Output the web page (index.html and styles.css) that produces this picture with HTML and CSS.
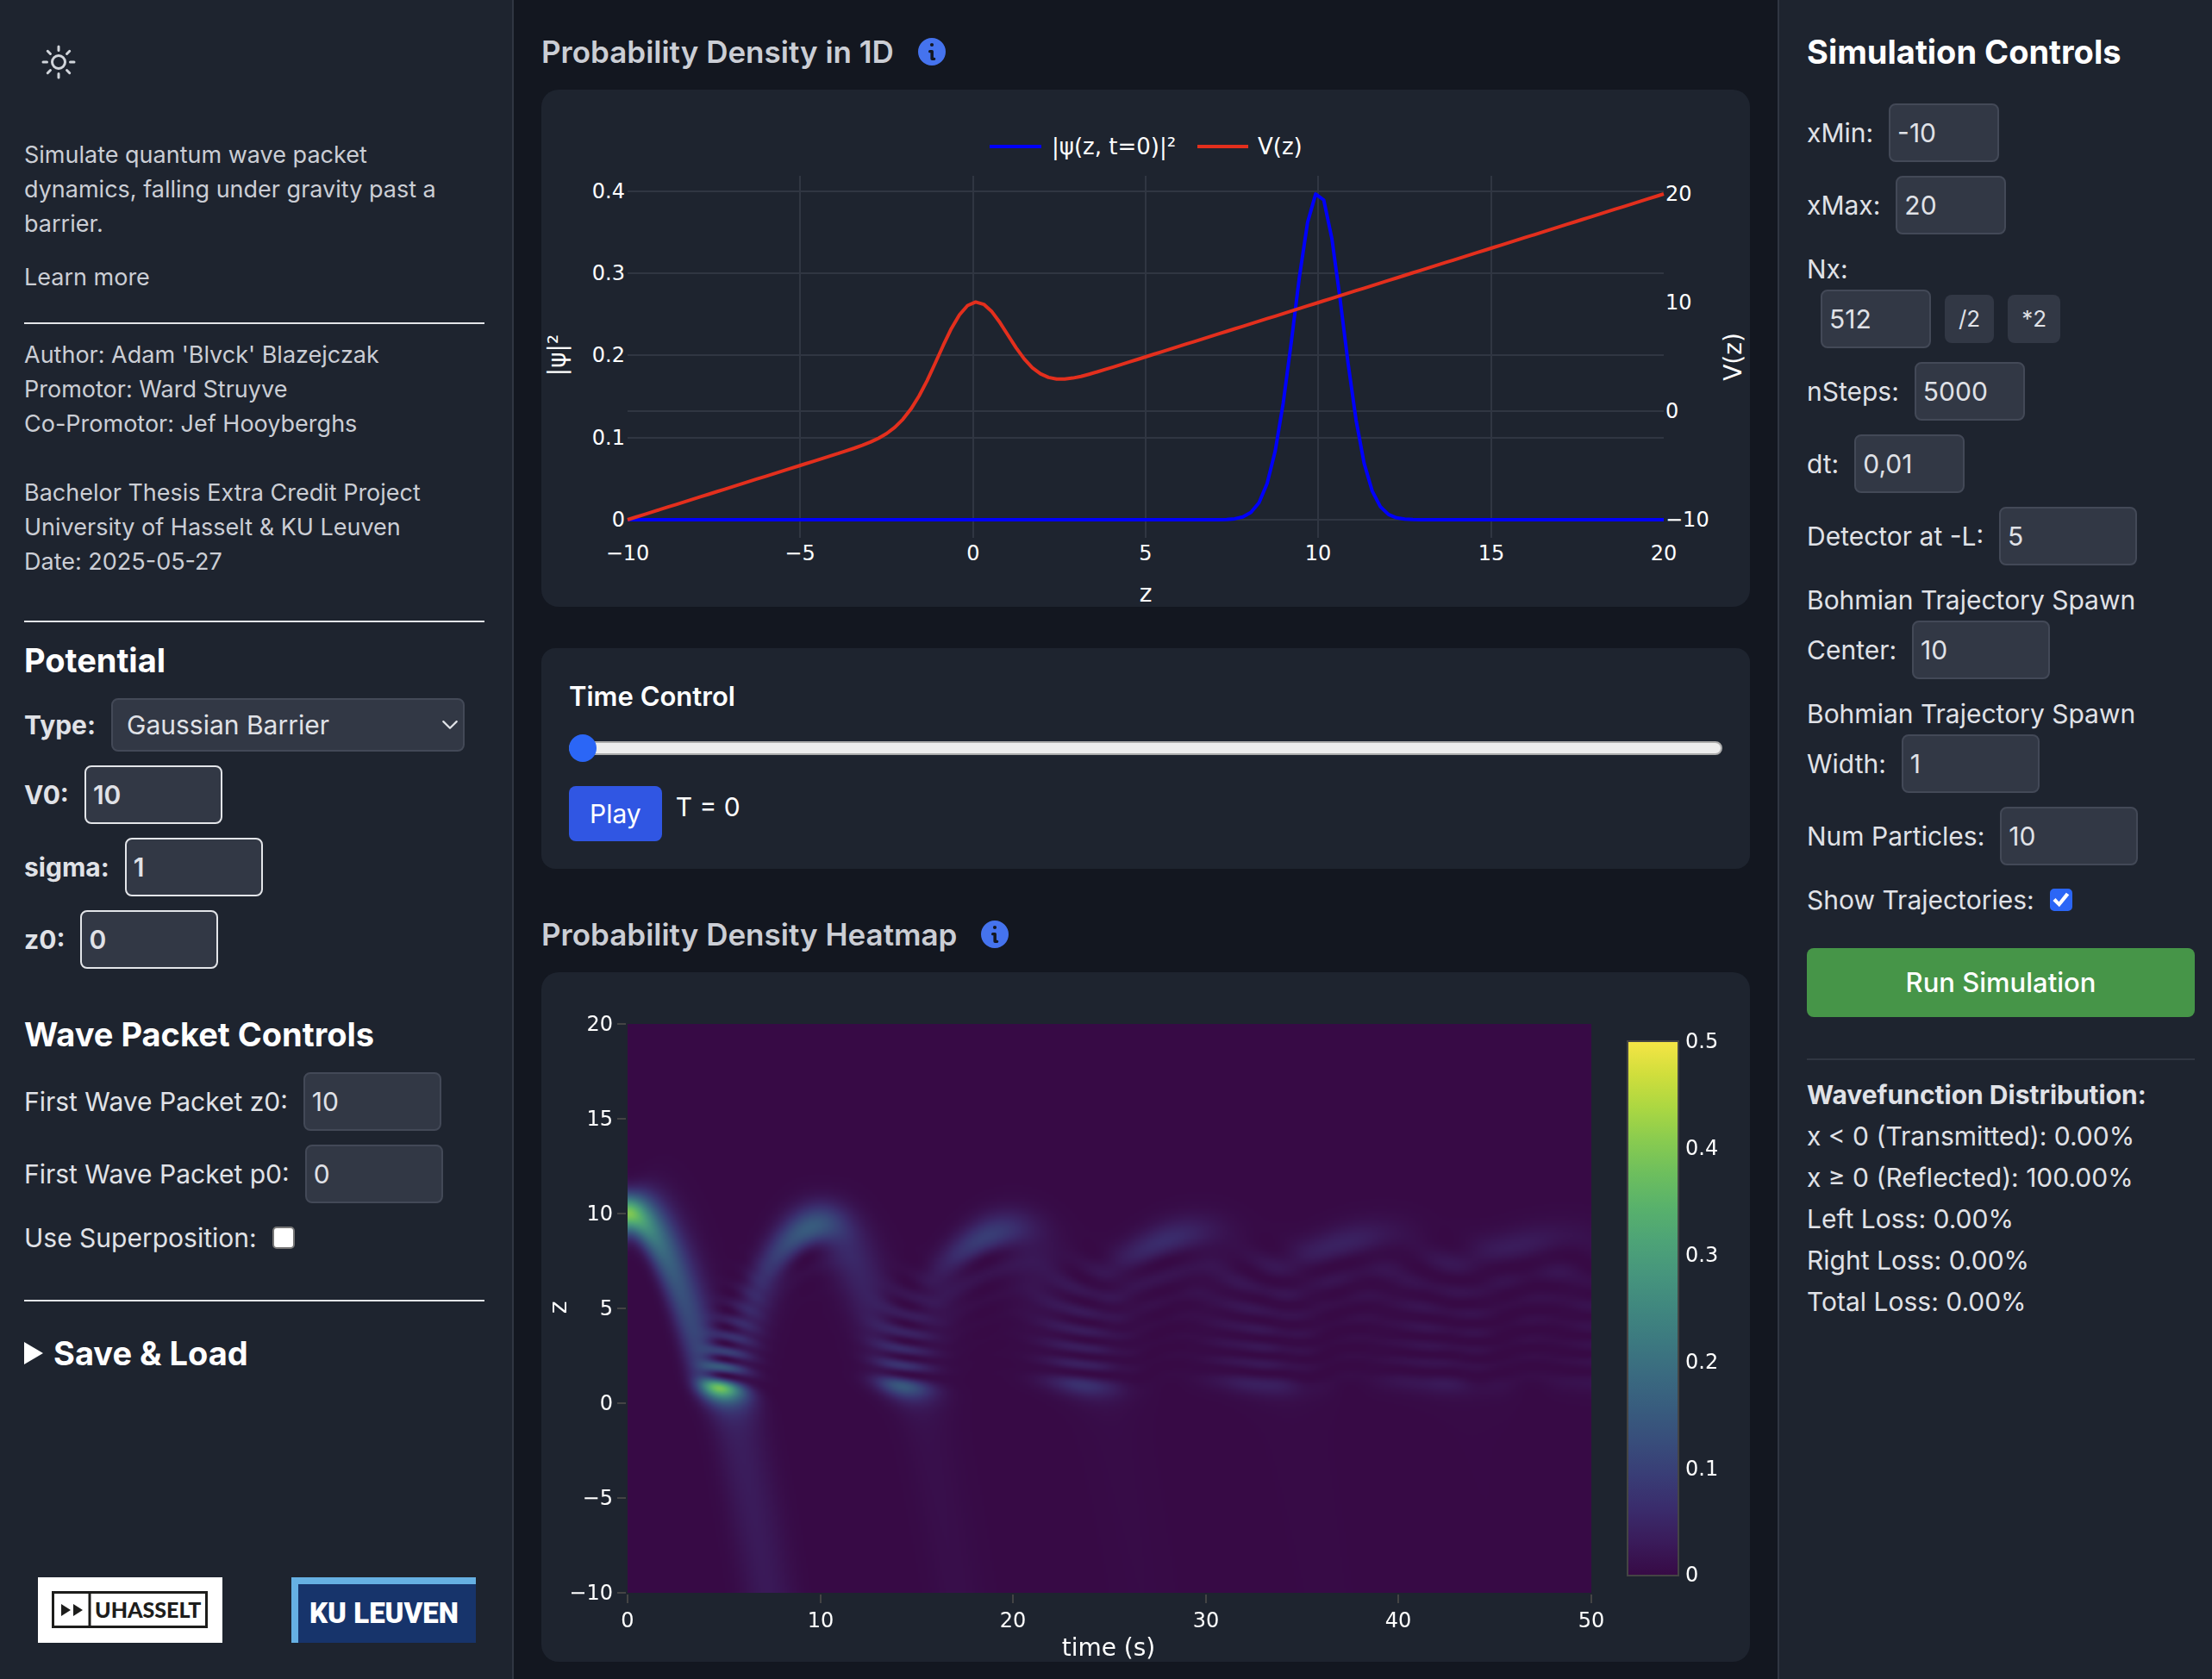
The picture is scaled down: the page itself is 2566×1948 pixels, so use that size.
FILE: index.html
```html
<!DOCTYPE html>
<html lang="en">
<head>
<meta charset="utf-8">
<meta name="viewport" content="width=device-width, initial-scale=1">
<title>Quantum wave packet simulation</title>
<link rel="stylesheet" href="styles.css">
</head>
<body>
<div class="app">
  <aside class="sidebar">
    <button class="theme-toggle" type="button" aria-label="Toggle theme">
      <svg viewBox="0 0 24 24" fill="none" stroke="currentColor" stroke-width="1.5" stroke-linecap="round" stroke-linejoin="round"><path d="M12 3v2.25m6.364.386-1.591 1.591M21 12h-2.25m-.386 6.364-1.591-1.591M12 18.75V21m-4.773-4.227-1.591 1.591M5.25 12H3m4.227-4.773L5.636 5.636M15.75 12a3.75 3.75 0 1 1-7.5 0 3.75 3.75 0 0 1 7.5 0Z"/></svg>
    </button>
    <p class="small intro">Simulate quantum wave packet<br>dynamics, falling under gravity past a<br>barrier.</p>
    <p class="small"><a class="learn" href="#about">Learn more</a></p>
    <hr class="rule">
    <p class="small credits">Author: Adam 'Blvck' Blazejczak<br>Promotor: Ward Struyve<br>Co-Promotor: Jef Hooyberghs<br><br>Bachelor Thesis Extra Credit Project<br>University of Hasselt &amp; KU Leuven<br>Date: 2025-05-27</p>
    <hr class="rule rule-section">

    <section class="group">
      <h2>Potential</h2>
      <div class="field strong">
        <label for="type">Type:</label>
        <span class="select">
          <select id="type"><option>Gaussian Barrier</option></select>
          <svg viewBox="0 0 16 10" fill="none" stroke="currentColor" stroke-width="2" stroke-linecap="round" stroke-linejoin="round"><path d="M1 1l7 7 7-7"/></svg>
        </span>
      </div>
      <div class="field strong"><label for="v0">V0:</label><input id="v0" class="num bright" type="text" value="10"></div>
      <div class="field strong"><label for="sigma">sigma:</label><input id="sigma" class="num bright" type="text" value="1"></div>
      <div class="field strong"><label for="z0">z0:</label><input id="z0" class="num bright" type="text" value="0"></div>
    </section>

    <section class="group">
      <h2>Wave Packet Controls</h2>
      <div class="field"><label for="wz">First Wave Packet z0:</label><input id="wz" class="num" type="text" value="10"></div>
      <div class="field"><label for="wp">First Wave Packet p0:</label><input id="wp" class="num" type="text" value="0"></div>
      <div class="field"><label for="sup">Use Superposition:</label><input id="sup" class="check" type="checkbox"></div>
    </section>

    <hr class="rule">
    <details class="save">
      <summary>Save &amp; Load</summary>
    </details>

    <div class="logos">
      <svg class="logo" viewBox="0 0 214 76" role="img" aria-label="UHasselt">
        <rect width="214" height="76" fill="#fff"/>
        <rect x="17.500" y="17.500" width="178" height="40" fill="none" stroke="#1d1d1b" stroke-width="3"/>
        <path d="M60 17v41" stroke="#1d1d1b" stroke-width="3"/>
        <path d="M27 31l11 7-11 7zM41 31l11 7-11 7z" fill="#1d1d1b"/>
        <text x="66" y="47" class="uh">UHASSELT</text>
      </svg>
      <svg class="logo" viewBox="0 0 214 76" role="img" aria-label="KU Leuven">
        <rect width="214" height="76" fill="#66b0e3"/>
        <rect x="8" y="8" width="206" height="68" fill="#17346b"/>
        <text x="21" y="53" class="ku">KU LEUVEN</text>
      </svg>
    </div>
  </aside>

  <main class="content">
    <div class="title-row">
      <h1>Probability Density in 1D</h1>
      <button class="info" type="button" aria-label="About the probability density"><svg viewBox="0 0 20 20" fill="currentColor" fill-rule="evenodd"><path d="M10 0a10 10 0 1 0 0 20a10 10 0 1 0 0-20ZM10 3.700a1.300 1.300 0 1 1 0 2.600 1.300 1.300 0 0 1 0-2.600ZM8.500 8.800h1.700a1 1 0 0 1 1 1v4.400h.5a1 1 0 0 1 0 2h-1.600a1.100 1.100 0 0 1-1.100-1.100v-4.300h-.5a1 1 0 0 1 0-2Z"/></svg></button>
    </div>
    <section class="card">
      <svg class="chart" viewBox="0 0 1402 600">
        <g class="grid">
          <path d="M300 100V520M501 100V520M701 100V520M901 100V520M1102 100V520"/>
          <path d="M100 118H1302M100 213H1302M100 308H1302M100 373H1302M100 404H1302M100 499H1302"/>
        </g>
        <path id="psi" class="trace" stroke="#0000fa"/>
        <path id="pot" class="trace" stroke="#e32f1d"/>
        <path class="trace" stroke="#0000fa" d="M520 66H580"/>
        <path class="trace" stroke="#e32f1d" d="M761 66H820"/>
        <g class="legend"><text x="592" y="75">|ψ(z, t=0)|²</text><text x="831" y="75">V(z)</text></g>
        <g class="end"><text x="97" y="126">0.4</text><text x="97" y="221">0.3</text><text x="97" y="316">0.2</text><text x="97" y="412">0.1</text><text x="97" y="507">0</text></g>
        <g class="mid"><text x="100" y="546">−10</text><text x="300" y="546">−5</text><text x="501" y="546">0</text><text x="701" y="546">5</text><text x="901" y="546">10</text><text x="1102" y="546">15</text><text x="1302" y="546">20</text></g>
        <g><text x="1304" y="129">20</text><text x="1304" y="255">10</text><text x="1304" y="381">0</text><text x="1304" y="507">−10</text></g>
        <g class="mid axis"><text x="701" y="594">z</text><text transform="translate(28 308) rotate(-90)">|ψ|²</text><text transform="translate(1392 310) rotate(-90)">V(z)</text></g>
      </svg>
    </section>

    <section class="card time">
      <label class="time-label" for="time">Time Control</label>
      <input id="time" class="slider" type="range" min="0" max="500" value="0">
      <div class="play-row"><button class="play" type="button">Play</button><output for="time">T = 0</output></div>
    </section>

    <div class="title-row">
      <h1>Probability Density Heatmap</h1>
      <button class="info" type="button" aria-label="About the heatmap"><svg viewBox="0 0 20 20" fill="currentColor" fill-rule="evenodd"><path d="M10 0a10 10 0 1 0 0 20a10 10 0 1 0 0-20ZM10 3.700a1.300 1.300 0 1 1 0 2.600 1.300 1.300 0 0 1 0-2.600ZM8.500 8.800h1.700a1 1 0 0 1 1 1v4.400h.5a1 1 0 0 1 0 2h-1.600a1.100 1.100 0 0 1-1.100-1.100v-4.300h-.5a1 1 0 0 1 0-2Z"/></svg></button>
    </div>
    <section class="card">
      <svg class="chart" viewBox="0 0 1402 800">
        <defs><linearGradient id="scale" x1="0" y1="1" x2="0" y2="0"></linearGradient></defs>
        <foreignObject x="100" y="60" width="1118" height="660"><canvas id="heat" class="heat" width="559" height="330"></canvas></foreignObject>
        <path class="ticks" d="M88 60h10M88 170h10M88 280h10M88 390h10M88 500h10M88 610h10M88 720h10M100 722v10M324 722v10M547 722v10M771 722v10M994 722v10M1218 722v10"/>
        <rect x="1260" y="80" width="59" height="620" fill="url(#scale)" stroke="#444" stroke-width="2"/>
        <g class="end"><text x="83" y="68">20</text><text x="83" y="178">15</text><text x="83" y="288">10</text><text x="83" y="398">5</text><text x="83" y="508">0</text><text x="83" y="618">−5</text><text x="83" y="728">−10</text></g>
        <g class="mid"><text x="100" y="760">0</text><text x="324" y="760">10</text><text x="547" y="760">20</text><text x="771" y="760">30</text><text x="994" y="760">40</text><text x="1218" y="760">50</text></g>
        <g><text x="1327" y="88">0.5</text><text x="1327" y="212">0.4</text><text x="1327" y="336">0.3</text><text x="1327" y="460">0.2</text><text x="1327" y="584">0.1</text><text x="1327" y="707">0</text></g>
        <g class="mid axis"><text x="658" y="793">time (s)</text><text transform="translate(29 389) rotate(-90)">z</text></g>
      </svg>
    </section>
  </main>

  <aside class="controls">
    <h2>Simulation Controls</h2>
    <div class="field"><label for="xmin">xMin:</label><input id="xmin" class="num narrow" type="text" value="-10"></div>
    <div class="field"><label for="xmax">xMax:</label><input id="xmax" class="num narrow" type="text" value="20"></div>
    <div class="field-block">
      <label for="nx">Nx:</label>
      <div class="field indent"><input id="nx" class="num narrow" type="text" value="512"><button class="step" type="button">/2</button><button class="step" type="button">*2</button></div>
    </div>
    <div class="field"><label for="nsteps">nSteps:</label><input id="nsteps" class="num narrow" type="text" value="5000"></div>
    <div class="field"><label for="dt">dt:</label><input id="dt" class="num narrow" type="text" value="0,01"></div>
    <div class="field"><label for="det">Detector at -L:</label><input id="det" class="num" type="text" value="5"></div>
    <label class="field-block" for="bc">Bohmian Trajectory Spawn
      <span class="field">Center: <input id="bc" class="num" type="text" value="10"></span>
    </label>
    <label class="field-block" for="bw">Bohmian Trajectory Spawn
      <span class="field">Width: <input id="bw" class="num" type="text" value="1"></span>
    </label>
    <div class="field"><label for="np">Num Particles:</label><input id="np" class="num" type="text" value="10"></div>
    <div class="field"><label for="traj">Show Trajectories:</label><input id="traj" class="check" type="checkbox" checked></div>
    <button class="run" type="button">Run Simulation</button>
    <div class="stats">
      <p class="stats-title">Wavefunction Distribution:</p>
      <p>x &lt; 0 (Transmitted): 0.00%</p>
      <p>x ≥ 0 (Reflected): 100.00%</p>
      <p>Left Loss: 0.00%</p>
      <p>Right Loss: 0.00%</p>
      <p>Total Loss: 0.00%</p>
    </div>
  </aside>
</div>
<script src="sim.js"></script>
</body>
</html>
```
FILE: styles.css
```css
* { box-sizing: border-box; margin: 0; }

body {
  background: #131720;
  color: #e0e2e7;
  font-family: Inter, "Liberation Sans", sans-serif;
  font-size: 30px;
  line-height: 48px;
}

button, input, select { font: inherit; color: inherit; }
button { border: 0; cursor: pointer; }

.app {
  display: grid;
  grid-template-columns: 596px minmax(0, 1fr) 504px;
  min-height: 100vh;
}

.sidebar, .controls { background: #1e242f; }

.sidebar {
  display: flex;
  flex-direction: column;
  padding: 32px 32px 42px 28px;
  border-right: 2px solid #303642;
}

.theme-toggle {
  align-self: flex-start;
  display: flex;
  padding: 16px;
  margin-bottom: 48px;
  background: none;
  color: #d1d5db;
}
.theme-toggle svg { width: 48px; height: 48px; }

.small { font-size: 27px; line-height: 40px; color: #cbced5; }
.intro { margin-bottom: 22px; }
.learn { color: inherit; text-decoration: none; }
.credits { margin-top: 16px; }

.rule {
  width: 100%;
  height: 2px;
  border: 0;
  background: #e3e5e9;
  margin-top: 32px;
}
.rule-section { margin-top: 48px; margin-bottom: 16px; }

h1, h2 { line-height: 56px; }
h1 { color: #cbced5; font-size: 35px; font-weight: 600; }
h2 { color: #fff; font-size: 38px; font-weight: 700; }

.group { display: flex; flex-direction: column; gap: 16px; margin-bottom: 48px; }
.group + .rule { margin-top: 0; }

.field { display: flex; align-items: center; gap: 18px; }
.strong { font-weight: 600; }
.strong label { font-weight: 700; }
.field-block { display: block; }
.indent { gap: 16px; padding-left: 16px; }

.num {
  width: 160px;
  height: 68px;
  padding: 0 8px;
  background: #323845;
  border: 2px solid #434957;
  border-radius: 8px;
}
.narrow { width: 128px; }
.bright { border-color: #e3e5e9; }

.select { position: relative; flex: 0 1 410px; }
.select select {
  display: block;
  width: 100%;
  height: 62px;
  padding: 0 16px;
  appearance: none;
  background: #323845;
  border: 2px solid #434957;
  border-radius: 8px;
  font-weight: 400;
}
.select svg { position: absolute; right: 8px; top: 26px; width: 18px; height: 11px; pointer-events: none; }

.check {
  appearance: none;
  width: 26px;
  height: 26px;
  background: #fff;
  border: 2px solid #767676;
  border-radius: 5px;
}
.check:checked { background: #2b66f6; border-color: #2b66f6; }
.check:checked::before {
  content: "";
  display: block;
  height: 100%;
  background: #fff;
  clip-path: polygon(8% 55%, 22% 41%, 40% 60%, 78% 12%, 94% 24%, 42% 88%);
}

.save { margin-top: 32px; }
.save summary {
  display: flex;
  align-items: center;
  gap: 12px;
  color: #fff;
  font-size: 38px;
  font-weight: 700;
  line-height: 56px;
}
.save summary::before {
  content: "";
  width: 22px;
  height: 26px;
  background: currentColor;
  clip-path: polygon(0 0, 100% 50%, 0 100%);
}

.logos { display: flex; gap: 80px; padding-left: 16px; margin-top: auto; }
.logo { width: 214px; }
.uh { font: 900 25px Lato, sans-serif; fill: #1d1d1b; }
.ku { font: 900 33px Roboto, sans-serif; fill: #fff; }

.content { display: flex; flex-direction: column; padding: 32px 32px 20px; }
.title-row { display: flex; align-items: center; gap: 28px; margin-bottom: 16px; }
.info { display: flex; padding: 0; background: none; color: #4573ee; }
.info svg { width: 32px; height: 32px; }

.card { background: #1e242f; border-radius: 20px; margin-bottom: 48px; }
.card:last-child { margin-bottom: 0; }

.chart { display: block; width: 100%; font: 24px "DejaVu Sans", sans-serif; fill: #fff; }
.grid path, .ticks { fill: none; stroke: #303642; stroke-width: 2; }
.ticks { stroke: #444; }
.trace { fill: none; stroke-width: 4; stroke-linejoin: round; }
.mid { text-anchor: middle; }
.end { text-anchor: end; }
.legend { font-size: 26px; }
.axis { font-size: 28px; }
.heat { display: block; width: 100%; height: 100%; }

.time { display: flex; flex-direction: column; padding: 32px; border-radius: 16px; }
.time-label { color: #fff; font-size: 31px; font-weight: 600; }
.slider {
  appearance: none;
  width: 100%;
  height: 16px;
  margin: 28px 0 36px;
  background: #ededed;
  border: 2px solid #ababab;
  border-radius: 8px;
}
.slider::-webkit-slider-thumb {
  appearance: none;
  width: 32px;
  height: 32px;
  margin-left: -2px;
  border-radius: 50%;
  background: #2b66f6;
}
.play-row { display: flex; align-items: flex-start; gap: 16px; color: #fff; }
.play { height: 64px; padding: 0 24px; background: #3056e3; border-radius: 8px; }

.controls { padding: 32px 20px 32px 32px; border-left: 2px solid #303642; display: flex; flex-direction: column; gap: 16px; }
.controls h2 { margin-bottom: 16px; }
.step { height: 56px; padding: 0 16px; font-size: 26px; background: #323845; border-radius: 8px; }
.run {
  height: 80px;
  margin-top: 16px;
  background: #469548;
  border-radius: 8px;
  color: #fff;
  font-size: 31px;
  font-weight: 500;
}
.stats { margin-top: 32px; padding-top: 16px; border-top: 2px solid #303642; }
.stats-title { font-weight: 700; }
```
FILE: sim.js
```js
// Colour scale, from density 0 to 0.5.
const SCALE = ['#370a45', '#3a1b5a', '#3a2c6c', '#393d76', '#384d7b', '#385c7e', '#3a6a80', '#3c7980', '#40877f', '#46957d', '#4da377', '#58b16c', '#6cbe5e', '#88cb50', '#abd742', '#d0de3c', '#f6e545'];
const rgb = SCALE.map(c => [1, 3, 5].map(i => parseInt(c.slice(i, i + 2), 16)));

const grad = document.getElementById('scale');
SCALE.forEach((c, i) => {
  const stop = document.createElementNS('http://www.w3.org/2000/svg', 'stop');
  stop.setAttribute('offset', i / 16);
  stop.setAttribute('stop-color', c);
  grad.appendChild(stop);
});

const potential = z => z + 10 * Math.exp(-z * z / 2);
const density = z => Math.exp(-(z - 10) * (z - 10)) / Math.sqrt(2 * Math.PI);

// Line chart traces.
function trace(id, f) {
  let d = '';
  for (let k = 0; k <= 128; k++) {
    const z = -10 + k * 30 / 128;
    d += (k ? 'L' : 'M') + (100 + (z + 10) * 1202 / 30).toFixed(1) + ' ' + f(z).toFixed(1);
  }
  document.getElementById(id).setAttribute('d', d);
}
trace('psi', z => 499 - 953 * density(z));
trace('pot', z => 373 - 12.6 * potential(z));

// Crank-Nicolson evolution on a padded grid, absorbing below z = -12.
const dx = 30 / 1024, zl = -24, n = Math.round(48 / dx), dt = 0.01;
const re = new Float64Array(n), im = new Float64Array(n);
const v = new Float64Array(n), w = new Float64Array(n);
for (let i = 0; i < n; i++) {
  const z = zl + i * dx;
  re[i] = Math.sqrt(density(z));
  v[i] = potential(Math.max(z, -12));
  const a = Math.max(0, -12 - z) / 12;
  w[i] = 12 * a * a;
}

// (1 + i dt H / 2) psi' = (1 - i dt H / 2) psi, with H = -d2/2 + V - iW.
// The off-diagonal term is -i k; pivots are inverted once, ahead of the run.
const k = dt / (4 * dx * dx);
const cr = new Float64Array(n), ci = new Float64Array(n);
const mr = new Float64Array(n), mi = new Float64Array(n);
for (let i = 0; i < n; i++) {
  let br = 1 + dt * w[i] / 2, bi = 2 * k + dt * v[i] / 2;
  if (i) { br -= k * ci[i - 1]; bi += k * cr[i - 1]; }
  const q = br * br + bi * bi;
  mr[i] = br / q; mi[i] = -bi / q;
  cr[i] = k * mi[i]; ci[i] = -k * mr[i];
}
const dr = new Float64Array(n), di = new Float64Array(n);
function step() {
  for (let i = 0; i < n; i++) {
    const ar = 1 - dt * w[i] / 2, ai = -(2 * k + dt * v[i] / 2);
    let sr = 0, si = 0;
    if (i) { sr += re[i - 1]; si += im[i - 1]; }
    if (i < n - 1) { sr += re[i + 1]; si += im[i + 1]; }
    let rr = ar * re[i] - ai * im[i] - k * si;
    let ri = ar * im[i] + ai * re[i] + k * sr;
    if (i) { rr -= k * di[i - 1]; ri += k * dr[i - 1]; }
    dr[i] = rr * mr[i] - ri * mi[i];
    di[i] = rr * mi[i] + ri * mr[i];
  }
  re[n - 1] = dr[n - 1]; im[n - 1] = di[n - 1];
  for (let i = n - 2; i >= 0; i--) {
    re[i] = dr[i] - (cr[i] * re[i + 1] - ci[i] * im[i + 1]);
    im[i] = di[i] - (cr[i] * im[i + 1] + ci[i] * re[i + 1]);
  }
}

const canvas = document.getElementById('heat');
const ctx = canvas.getContext('2d');
const W = canvas.width, H = canvas.height;
const img = ctx.createImageData(W, H);
let t = 0;
for (let x = 0; x < W; x++) {
  const target = Math.round(x / (W - 1) * 5000);
  while (t < target) { step(); t++; }
  for (let y = 0; y < H; y++) {
    const z = 20 - 30 * y / (H - 1);
    const p = (z - zl) / dx, i = Math.floor(p), f = p - i;
    const a = re[i] * re[i] + im[i] * im[i];
    const b = re[i + 1] * re[i + 1] + im[i + 1] * im[i + 1];
    const s = Math.min(15.999, Math.max(0, (a + (b - a) * f) / 0.5 * 16));
    const j = Math.floor(s), g = s - j, o = (y * W + x) * 4;
    for (let c = 0; c < 3; c++) img.data[o + c] = rgb[j][c] + (rgb[j + 1][c] - rgb[j][c]) * g;
    img.data[o + 3] = 255;
  }
}
ctx.putImageData(img, 0, 0);
```
